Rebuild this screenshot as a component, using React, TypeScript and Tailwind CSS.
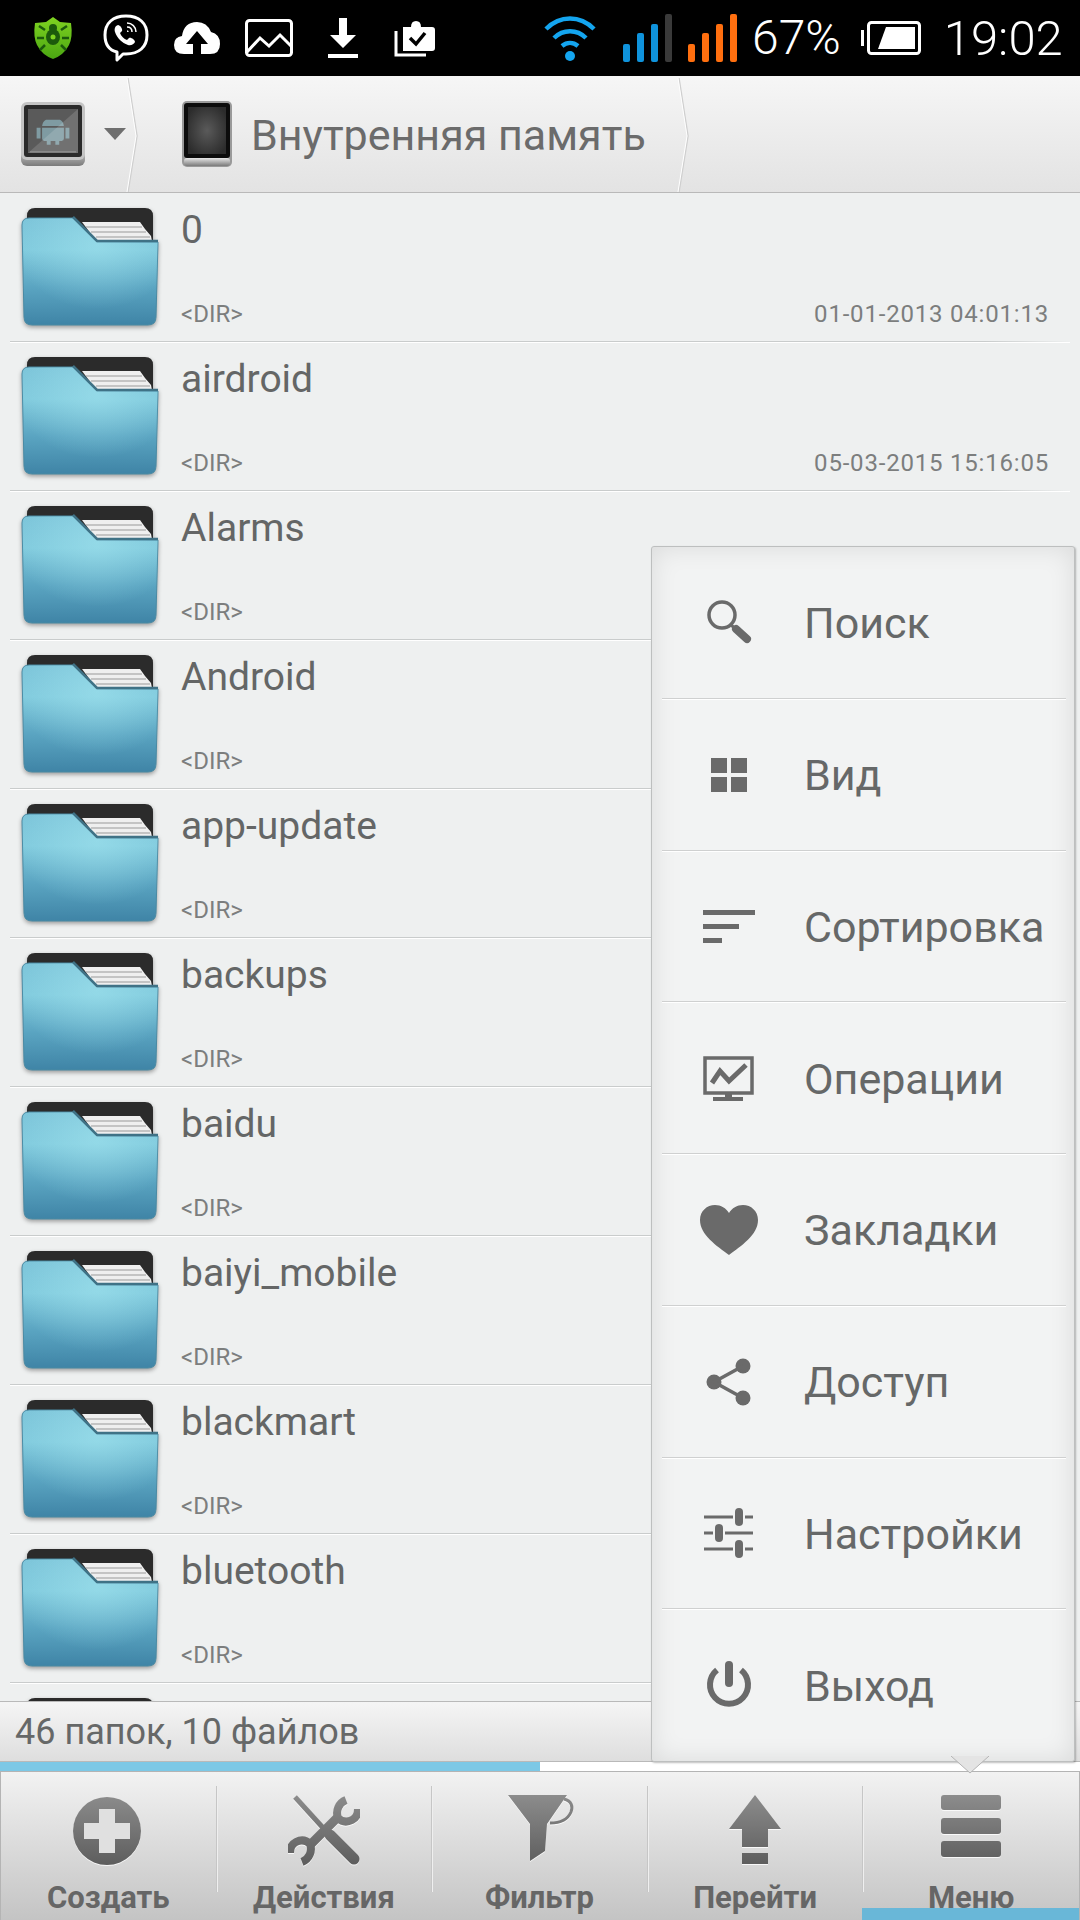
import type { ReactNode } from "react";

type FolderEntry = { name: string; date?: string };

const folders: FolderEntry[] = [
  { name: "0", date: "01-01-2013 04:01:13" },
  { name: "airdroid", date: "05-03-2015 15:16:05" },
  { name: "Alarms" },
  { name: "Android" },
  { name: "app-update" },
  { name: "backups" },
  { name: "baidu" },
  { name: "baiyi_mobile" },
  { name: "blackmart" },
  { name: "bluetooth" },
];

const SvgDefs = () => (
  <svg className="absolute w-0 h-0" aria-hidden="true">
    <defs>
      <linearGradient id="folderFront" x1="0" y1="0" x2="0" y2="1">
        <stop offset="0" stopColor="#7cc4d9" />
        <stop offset="0.3" stopColor="#80cadd" />
        <stop offset="0.65" stopColor="#5aa4c1" />
        <stop offset="1" stopColor="#3f84a6" />
      </linearGradient>
      <radialGradient id="folderGlow" cx="0.55" cy="0.25" r="0.6">
        <stop offset="0" stopColor="#a4e6f0" stopOpacity="0.55" />
        <stop offset="1" stopColor="#a4e6f0" stopOpacity="0" />
      </radialGradient>
      <linearGradient id="barIcon" gradientUnits="userSpaceOnUse" x1="0" y1="0" x2="0" y2="72">
        <stop offset="0" stopColor="#8c8c8c" />
        <stop offset="1" stopColor="#5c5c5c" />
      </linearGradient>
      <linearGradient id="shield" x1="0" y1="0" x2="0" y2="1">
        <stop offset="0" stopColor="#7fd321" />
        <stop offset="1" stopColor="#4aa512" />
      </linearGradient>
      <linearGradient id="silver" x1="0" y1="0" x2="0" y2="1">
        <stop offset="0" stopColor="#e6e6e6" />
        <stop offset="1" stopColor="#7a7a7a" />
      </linearGradient>
      <radialGradient id="screen" cx="0.5" cy="0.5" r="0.6">
        <stop offset="0" stopColor="#5a5a5a" />
        <stop offset="1" stopColor="#2c2c2c" />
      </radialGradient>
    </defs>
  </svg>
);

const FolderIcon = () => (
  <svg width="140" height="122" viewBox="0 0 140 122" className="shrink-0 drop-shadow-[0_2px_2px_rgba(0,0,0,0.35)]">
    <path d="M7 9q0-8 8-8h110q8 0 8 8v34H7z" fill="#2b2b2b" />
    <path d="M62 15h58l5 7 6 7 2 10H80z" fill="#efefef" />
    <path d="M66 20h56M71 25h55M76 30h54" stroke="#9a9a9a" strokeWidth="1.2" />
    <path
      d="M2 18q0-7 7-7h44l24 24h61l-2 75q0 8-8 8H12q-8 0-8-8z"
      fill="url(#folderFront)"
      stroke="#4a8aa3"
      strokeWidth="1"
    />
    <path d="M2 18q0-7 7-7h44l24 24h61l-2 75q0 8-8 8H12q-8 0-8-8z" fill="url(#folderGlow)" />
    <path d="M53 10l24 24h61" fill="none" stroke="#3f7286" strokeWidth="2.5" />
  </svg>
);

const FolderRow = ({ name, date }: FolderEntry) => (
  <div className="h-[149px] shrink-0 flex flex-col">
    <div className="flex flex-1 pl-[20px] pt-[14px] min-h-0">
      <FolderIcon />
      <div className="flex-1 flex flex-col pl-[21px] pr-[31px] min-w-0">
        <div className="text-[39px] leading-[46px] text-[#646666]">{name}</div>
        <div className="flex justify-between text-[24px] leading-[28px] text-[#7c7e7e] mt-[47px]">
          <span>{"<DIR>"}</span>
          {date && <span className="tracking-[0.8px]">{date}</span>}
        </div>
      </div>
    </div>
    <div className="h-px mx-[10px] bg-linear-to-r from-[#c9cccc] from-92% to-[#eef0f0] shadow-[0_1px_0_#ffffff]" />
  </div>
);

const StatusBar = () => (
  <div className="h-[76px] shrink-0 bg-black flex items-center text-white">
    <svg width="40" height="44" viewBox="0 0 40 44" className="ml-[33px]">
      <path d="M20 1l7 5 11 1q2 14-2 22-5 10-16 14Q9 39 4 29 0 21 2 7l11-1z" fill="url(#shield)" />
      <ellipse cx="20" cy="21" rx="7" ry="8" fill="#1c5a0c" />
      <circle cx="20" cy="12" r="4" fill="#1c5a0c" />
      <path d="M12 14l-6-4M28 14l6-4M11 22H4M29 22h7M12 29l-5 5M28 29l5 5" stroke="#1c5a0c" strokeWidth="2.5" />
      <circle cx="20" cy="21" r="2.5" fill="#7fd321" />
    </svg>
    <svg width="46" height="48" viewBox="0 0 46 48" className="ml-[30px]" fill="none">
      <path
        d="M14 38C5 36 2 30 2 21 2 9 10 2 23 2s21 7 21 19-8 19-21 19h-3l-6 6z"
        stroke="#fff"
        strokeWidth="3"
        strokeLinejoin="round"
      />
      <path
        d="M15 11c-3 1-4 4-3 7 2 6 7 11 13 13 3 1 6-1 7-3 0-2-4-5-6-4l-2 2c-3-1-6-4-7-7l2-2c1-2-2-6-4-6z"
        fill="#fff"
      />
      <path d="M24 9c5 0 9 4 9 9M24 13c3 0 5 2 5 5M24 17c1 0 1 0 1 1" stroke="#fff" strokeWidth="1.5" />
    </svg>
    <svg width="46" height="36" viewBox="0 0 46 36" className="ml-[25px]">
      <path d="M10 34Q0 34 0 25q0-8 8-9Q10 2 23 2q10 0 14 10 9 2 9 12 0 10-10 10z" fill="#fff" />
      <path d="M23 11l11 13h-7v10h-8V24h-7z" fill="#000" />
    </svg>
    <svg width="48" height="38" viewBox="0 0 48 38" className="ml-[25px]" fill="none">
      <rect x="1.5" y="1.5" width="45" height="35" rx="3" stroke="#fff" strokeWidth="3" />
      <path d="M2 33l13-14 9 8 11-11 11 11" stroke="#fff" strokeWidth="3" />
    </svg>
    <svg width="32" height="42" viewBox="0 0 32 42" className="ml-[34px]" fill="#fff">
      <path d="M12 1h8v17h9L16 31 3 18h9z" />
      <rect x="1" y="37" width="30" height="4" />
    </svg>
    <svg width="42" height="38" viewBox="0 0 42 38" className="ml-[35px]" fill="none">
      <path d="M2 12v24h30" stroke="#fff" strokeWidth="3" />
      <path d="M9 8h8q0-6 5-6t5 6h11q3 0 3 3v18q0 3-3 3H9z" fill="#fff" />
      <path d="M16 19l6 6 9-11" stroke="#000" strokeWidth="3.5" />
    </svg>
    <svg width="52" height="48" viewBox="0 0 52 48" className="ml-[108px]" fill="none">
      <path d="M2 15c14-14 34-14 48 0M10 24c9-9 23-9 32 0M18 32c5-4 11-4 16 0" stroke="#14a5ef" strokeWidth="4.5" />
      <circle cx="26" cy="42" r="5" fill="#14a5ef" />
    </svg>
    <svg width="52" height="50" viewBox="0 0 52 50" className="ml-[26px]">
      <rect x="1" y="31" width="7" height="18" rx="2" fill="#0f93dc" />
      <rect x="15" y="20" width="7" height="29" rx="2" fill="#0f93dc" />
      <rect x="29" y="11" width="7" height="38" rx="2" fill="#0f93dc" />
      <rect x="43" y="1" width="7" height="48" rx="2" fill="#3a3a3a" />
    </svg>
    <svg width="52" height="50" viewBox="0 0 52 50" className="ml-[13px]">
      <rect x="1" y="31" width="7" height="18" rx="2" fill="#ff6f0f" />
      <rect x="15" y="20" width="7" height="29" rx="2" fill="#ff6f0f" />
      <rect x="29" y="11" width="7" height="38" rx="2" fill="#ff6f0f" />
      <rect x="43" y="1" width="7" height="48" rx="2" fill="#ff6f0f" />
    </svg>
    <span className="ml-[13px] text-[48px] leading-none font-light">67%</span>
    <svg width="60" height="34" viewBox="0 0 60 34" className="ml-[20px]" fill="none">
      <rect x="0" y="9" width="3" height="16" fill="#fff" />
      <rect x="7.5" y="1.5" width="51" height="31" rx="3" stroke="#fff" strokeWidth="3" />
      <path d="M25 6h29v22H17z" fill="#fff" />
    </svg>
    <span className="ml-[23px] text-[49px] leading-none font-light">19:02</span>
  </div>
);

const Crumb = () => (
  <svg width="12" height="116" viewBox="0 0 12 116" fill="none" className="shrink-0">
    <path d="M2 2l9 58-9 56" stroke="#cfcfcf" strokeWidth="1.5" />
    <path d="M1 2l9 58-9 56" stroke="#ffffff" strokeWidth="1" />
  </svg>
);

const PathBar = () => (
  <div className="h-[117px] shrink-0 flex items-center bg-linear-to-b from-[#f6f6f6] to-[#e3e3e3] border-b border-[#b9b9b9] text-[#6b6b6b]">
    <svg width="66" height="66" viewBox="0 0 66 66" className="ml-[20px]">
      <rect x="1" y="44" width="64" height="21" rx="6" fill="url(#silver)" />
      <rect x="1" y="1" width="64" height="58" rx="6" fill="#c4c4c4" />
      <rect x="4" y="4" width="58" height="52" rx="3" fill="#2a2a2a" />
      <rect x="8" y="8" width="50" height="44" fill="#5a5a5a" />
      <g transform="translate(33 29) scale(0.78) translate(-33 -27)">
        <path
          d="M24 14h18q4 2 5 8H19q1-6 5-8zM19 24h28v14q0 3-3 3h-3v5h-5v-5h-6v5h-5v-5h-3q-3 0-3-3zM12 24h5v14h-5zM49 24h5v14h-5z"
          fill="#7f9ba2"
        />
      </g>
      <path d="M8 52L58 8v44z" fill="#ffffff" opacity="0.14" />
      <rect x="10" y="50" width="46" height="1.5" fill="#8a8a8a" />
    </svg>
    <svg width="22" height="12" viewBox="0 0 22 12" className="ml-[18px]">
      <path d="M0 0h22L11 12z" fill="#6f6f6f" />
    </svg>
    <Crumb />
    <svg width="52" height="68" viewBox="0 0 52 68" className="ml-[43px]">
      <rect x="1" y="1" width="50" height="66" rx="5" fill="#9a9a9a" />
      <rect x="3" y="58" width="46" height="8" rx="3" fill="url(#silver)" />
      <rect x="3" y="3" width="46" height="55" rx="3" fill="#0c0c0c" />
      <rect x="7" y="7" width="38" height="47" fill="url(#screen)" />
    </svg>
    <span className="ml-[18px] text-[43px] leading-none mt-[3px]">Внутренняя память</span>
    <div className="ml-[31px]">
      <Crumb />
    </div>
  </div>
);

const menuItems: { label: string; icon: ReactNode }[] = [
  {
    label: "Поиск",
    icon: (
      <>
        <circle cx="23" cy="22" r="13" fill="none" stroke="#6a6a6a" strokeWidth="3.5" />
        <path d="M37 36l11 10" stroke="#6a6a6a" strokeWidth="8" strokeLinecap="round" />
        <path d="M32 32l6 5" stroke="#6a6a6a" strokeWidth="3" />
      </>
    ),
  },
  {
    label: "Вид",
    icon: (
      <>
        <rect x="12" y="13" width="16" height="15" />
        <rect x="32" y="13" width="16" height="15" />
        <rect x="12" y="32" width="16" height="15" />
        <rect x="32" y="32" width="16" height="15" />
      </>
    ),
  },
  {
    label: "Сортировка",
    icon: (
      <>
        <rect x="4" y="14" width="52" height="5" />
        <rect x="4" y="28" width="36" height="5" />
        <rect x="4" y="42" width="19" height="5" />
      </>
    ),
  },
  {
    label: "Операции",
    icon: (
      <>
        <rect x="6" y="10" width="47" height="35" fill="none" stroke="#6a6a6a" strokeWidth="3.5" />
        <rect x="26" y="46" width="7" height="4" />
        <rect x="14" y="49" width="30" height="4" />
        <path d="M13 35l8-12 9 10 17-16" fill="none" stroke="#6a6a6a" strokeWidth="5" />
      </>
    ),
  },
  {
    label: "Закладки",
    icon: <path d="M30 55C18 46 1 35 1 20 1 11 8 5 16 5c6 0 11 3 14 8 3-5 8-8 14-8 8 0 15 6 15 15 0 15-17 26-29 35z" />,
  },
  {
    label: "Доступ",
    icon: (
      <>
        <circle cx="15" cy="30" r="7.5" />
        <circle cx="44" cy="14" r="7.5" />
        <circle cx="44" cy="46" r="7.5" />
        <path d="M44 14L15 30l29 16" fill="none" stroke="#6a6a6a" strokeWidth="3.5" />
      </>
    ),
  },
  {
    label: "Настройки",
    icon: (
      <>
        <path d="M5 14h29M46 14h8M5 30h9M26 30h28M5 46h29M46 46h8" stroke="#6a6a6a" strokeWidth="3" />
        <rect x="36" y="5" width="8" height="18" rx="4" />
        <rect x="16" y="21" width="8" height="18" rx="4" />
        <rect x="36" y="37" width="8" height="18" rx="4" />
      </>
    ),
  },
  {
    label: "Выход",
    icon: (
      <>
        <path d="M18 15a19 19 0 1 0 24 0" fill="none" stroke="#6a6a6a" strokeWidth="6" />
        <rect x="26" y="6" width="8" height="26" rx="4" />
      </>
    ),
  },
];

const PopupMenu = () => (
  <div className="absolute left-[651px] top-[546px] w-[424px] h-[1216px] flex flex-col bg-[#f2f3f3] border border-[#bdbfbf] rounded-[3px] shadow-[inset_0_0_26px_rgba(0,0,0,0.1),1px_1px_2px_rgba(0,0,0,0.25)]">
    {menuItems.map((item, i) => (
      <div key={item.label} className="flex-1 relative flex items-center">
        <svg width="60" height="60" viewBox="0 0 60 60" fill="#6a6a6a" className="ml-[47px] shrink-0">
          {item.icon}
        </svg>
        <span className="ml-[45px] mt-[2px] text-[43px] leading-none text-[#666868]">{item.label}</span>
        {i < menuItems.length - 1 && (
          <div className="absolute left-[10px] right-[8px] bottom-0 h-px bg-[#cfd0d0] shadow-[0_1px_0_#ffffff]" />
        )}
      </div>
    ))}
  </div>
);

const tabs: { label: string; icon: ReactNode }[] = [
  {
    label: "Создать",
    icon: (
      <>
        <circle cx="35" cy="36" r="34" />
        <path d="M27 14h16v14h15v16H43v14H27V44H12V28h15z" fill="#e0e0e0" />
      </>
    ),
  },
  {
    label: "Действия",
    icon: (
      <>
        <path d="M7 2l30 33" fill="none" stroke="url(#barIcon)" strokeWidth="5" />
        <path d="M42 40l24 24" fill="none" stroke="url(#barIcon)" strokeWidth="11" strokeLinecap="round" />
        <path d="M20 52l32-32" fill="none" stroke="url(#barIcon)" strokeWidth="9" />
        <path d="M58 5a14 14 0 0 0-8 18q6 6 14 2 6-3 6-11" fill="none" stroke="url(#barIcon)" strokeWidth="8" />
        <path d="M14 67a14 14 0 0 0 8-18q-6-6-14-2-6 3-6 11" fill="none" stroke="url(#barIcon)" strokeWidth="8" />
      </>
    ),
  },
  {
    label: "Фильтр",
    icon: (
      <>
        <path d="M5 0h59L44 29l-2 27-15 10V29z" />
        <path d="M61 4c8 2 9 8 7 13-3 7-10 11-21 11" fill="none" stroke="url(#barIcon)" strokeWidth="3" />
      </>
    ),
  },
  {
    label: "Перейти",
    icon: (
      <>
        <path d="M36 0l26 34H49v18H23V34H10z" />
        <rect x="23" y="58" width="26" height="11" />
      </>
    ),
  },
  {
    label: "Меню",
    icon: (
      <>
        <rect x="6" y="0" width="60" height="15" rx="3" />
        <rect x="6" y="23" width="60" height="16" rx="3" />
        <rect x="6" y="46" width="60" height="16" rx="3" />
      </>
    ),
  },
];

const TabBar = () => (
  <div className="relative h-[149px] shrink-0 flex bg-linear-to-b from-[#f2f2f2] to-[#c4c4c4] border-t border-x border-[#b4b4b4] overflow-hidden">
    {tabs.map((tab, i) => (
      <div key={tab.label} className="flex flex-1 min-w-0">
        <div className="flex-1 flex flex-col items-center pt-[23px] min-w-0">
          <svg
            width="72"
            height="72"
            viewBox="0 0 72 72"
            fill="url(#barIcon)"
            className="shrink-0 drop-shadow-[0_1px_0_rgba(255,255,255,0.8)]"
          >
            {tab.icon}
          </svg>
          <span className="mt-[15px] text-[31px] leading-none font-bold text-[#666666] whitespace-nowrap">
            {tab.label}
          </span>
        </div>
        {i < tabs.length - 1 && <div className="w-px h-[106px] mt-[14px] bg-[#c6c6c6] shadow-[1px_0_0_#efefef]" />}
      </div>
    ))}
    <div className="absolute right-0 bottom-0 w-[217px] h-[12px] bg-[#69b7d8]" />
  </div>
);

export default function App() {
  return (
    <div
      className="relative w-[1080px] h-[1920px] flex flex-col overflow-hidden bg-[#eef0f0]"
      style={{ fontFamily: "Roboto, 'Noto Sans', sans-serif" }}
    >
      <SvgDefs />
      <StatusBar />
      <PathBar />
      <div className="flex-1 min-h-0 overflow-hidden flex flex-col">
        {folders.map((folder) => (
          <FolderRow key={folder.name} {...folder} />
        ))}
        <div className="pl-[20px] pt-[14px]">
          <FolderIcon />
        </div>
      </div>
      <div className="h-[61px] shrink-0 flex items-center pl-[15px] text-[36px] leading-none text-[#666868] bg-linear-to-b from-[#f5f5f5] to-[#dedede] border-y border-[#b9b9b9]">
        46 папок, 10 файлов
      </div>
      <div className="h-[9px] shrink-0 bg-white">
        <div className="h-full w-[540px] bg-[#7cc8e6]" />
      </div>
      <TabBar />
      <PopupMenu />
      <svg width="40" height="18" viewBox="0 0 40 18" className="absolute left-[950px] top-[1756px]">
        <path d="M1 0l19 17L39 0z" fill="#e4e4e4" />
        <path d="M1 0l19 17L39 0" fill="none" stroke="#b4b4b4" strokeWidth="1" />
      </svg>
    </div>
  );
}
